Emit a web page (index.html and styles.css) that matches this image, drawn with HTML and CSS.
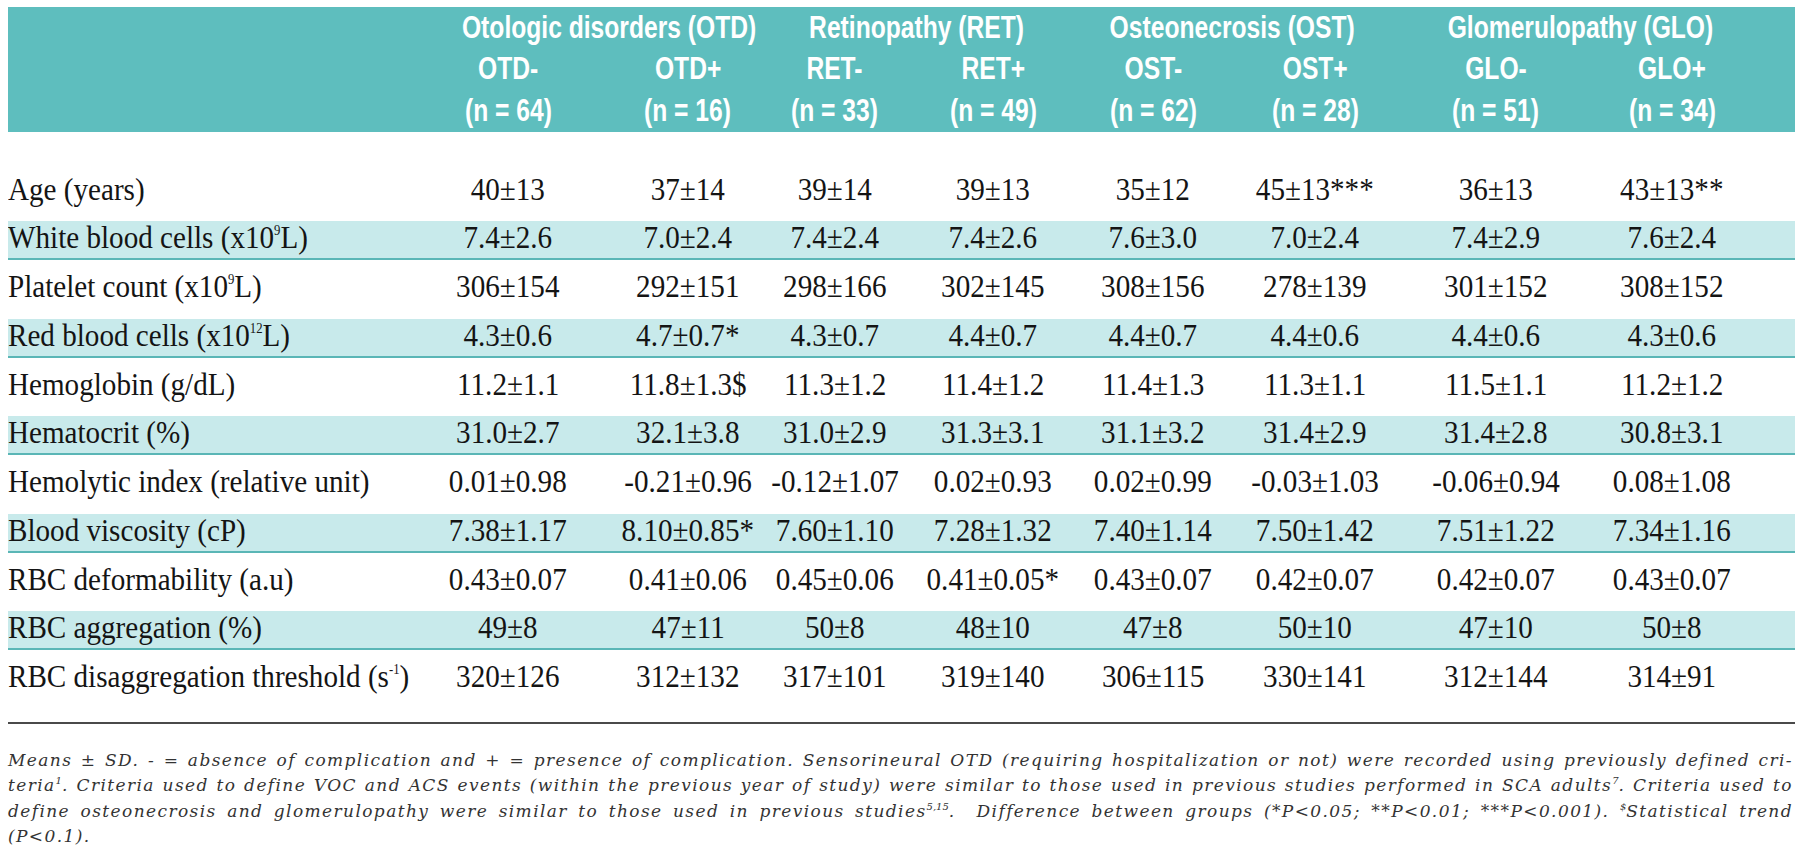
FILE: index.html
```html
<!DOCTYPE html>
<html lang="en">
<head>
<meta charset="utf-8">
<title>Table</title>
<link rel="stylesheet" href="styles.css">
</head>
<body>
<div class="page">
  <div class="thead">
    <div class="hrow groups">
      <div class="hc"></div>
      <div class="grp g-otd"><span>Otologic disorders (OTD)</span></div>
      <div class="grp g-ret"><span>Retinopathy (RET)</span></div>
      <div class="grp g-ost"><span>Osteonecrosis (OST)</span></div>
      <div class="grp g-glo"><span>Glomerulopathy (GLO)</span></div>
    </div>
    <div class="hrow subs">
      <div class="hc"></div>
      <div class="hc"><span>OTD-</span></div>
      <div class="hc"><span>OTD+</span></div>
      <div class="hc"><span>RET-</span></div>
      <div class="hc"><span>RET+</span></div>
      <div class="hc"><span>OST-</span></div>
      <div class="hc"><span>OST+</span></div>
      <div class="hc"><span>GLO-</span></div>
      <div class="hc"><span>GLO+</span></div>
    </div>
    <div class="hrow ns">
      <div class="hc"></div>
      <div class="hc"><span>(n = 64)</span></div>
      <div class="hc"><span>(n = 16)</span></div>
      <div class="hc"><span>(n = 33)</span></div>
      <div class="hc"><span>(n = 49)</span></div>
      <div class="hc"><span>(n = 62)</span></div>
      <div class="hc"><span>(n = 28)</span></div>
      <div class="hc"><span>(n = 51)</span></div>
      <div class="hc"><span>(n = 34)</span></div>
    </div>
  </div>

  <div class="tbody">
    <div class="row">
      <div class="lbl"><span>Age (years)</span></div>
      <div class="cell"><span>40±13</span></div><div class="cell"><span>37±14</span></div><div class="cell"><span>39±14</span></div><div class="cell"><span>39±13</span></div><div class="cell"><span>35±12</span></div><div class="cell"><span>45±13***</span></div><div class="cell"><span>36±13</span></div><div class="cell"><span>43±13**</span></div>
    </div>
    <div class="row alt">
      <div class="lbl"><span>White blood cells (x10<sup class="sp">9</sup>L)</span></div>
      <div class="cell"><span>7.4±2.6</span></div><div class="cell"><span>7.0±2.4</span></div><div class="cell"><span>7.4±2.4</span></div><div class="cell"><span>7.4±2.6</span></div><div class="cell"><span>7.6±3.0</span></div><div class="cell"><span>7.0±2.4</span></div><div class="cell"><span>7.4±2.9</span></div><div class="cell"><span>7.6±2.4</span></div>
    </div>
    <div class="row">
      <div class="lbl"><span>Platelet count (x10<sup class="sp">9</sup>L)</span></div>
      <div class="cell"><span>306±154</span></div><div class="cell"><span>292±151</span></div><div class="cell"><span>298±166</span></div><div class="cell"><span>302±145</span></div><div class="cell"><span>308±156</span></div><div class="cell"><span>278±139</span></div><div class="cell"><span>301±152</span></div><div class="cell"><span>308±152</span></div>
    </div>
    <div class="row alt">
      <div class="lbl"><span>Red blood cells (x10<sup class="sp">12</sup>L)</span></div>
      <div class="cell"><span>4.3±0.6</span></div><div class="cell"><span>4.7±0.7*</span></div><div class="cell"><span>4.3±0.7</span></div><div class="cell"><span>4.4±0.7</span></div><div class="cell"><span>4.4±0.7</span></div><div class="cell"><span>4.4±0.6</span></div><div class="cell"><span>4.4±0.6</span></div><div class="cell"><span>4.3±0.6</span></div>
    </div>
    <div class="row">
      <div class="lbl"><span>Hemoglobin (g/dL)</span></div>
      <div class="cell"><span>11.2±1.1</span></div><div class="cell"><span>11.8±1.3$</span></div><div class="cell"><span>11.3±1.2</span></div><div class="cell"><span>11.4±1.2</span></div><div class="cell"><span>11.4±1.3</span></div><div class="cell"><span>11.3±1.1</span></div><div class="cell"><span>11.5±1.1</span></div><div class="cell"><span>11.2±1.2</span></div>
    </div>
    <div class="row alt">
      <div class="lbl"><span>Hematocrit (%)</span></div>
      <div class="cell"><span>31.0±2.7</span></div><div class="cell"><span>32.1±3.8</span></div><div class="cell"><span>31.0±2.9</span></div><div class="cell"><span>31.3±3.1</span></div><div class="cell"><span>31.1±3.2</span></div><div class="cell"><span>31.4±2.9</span></div><div class="cell"><span>31.4±2.8</span></div><div class="cell"><span>30.8±3.1</span></div>
    </div>
    <div class="row">
      <div class="lbl"><span>Hemolytic index (relative unit)</span></div>
      <div class="cell"><span>0.01±0.98</span></div><div class="cell"><span>-0.21±0.96</span></div><div class="cell"><span>-0.12±1.07</span></div><div class="cell"><span>0.02±0.93</span></div><div class="cell"><span>0.02±0.99</span></div><div class="cell"><span>-0.03±1.03</span></div><div class="cell"><span>-0.06±0.94</span></div><div class="cell"><span>0.08±1.08</span></div>
    </div>
    <div class="row alt">
      <div class="lbl"><span>Blood viscosity (cP)</span></div>
      <div class="cell"><span>7.38±1.17</span></div><div class="cell"><span>8.10±0.85*</span></div><div class="cell"><span>7.60±1.10</span></div><div class="cell"><span>7.28±1.32</span></div><div class="cell"><span>7.40±1.14</span></div><div class="cell"><span>7.50±1.42</span></div><div class="cell"><span>7.51±1.22</span></div><div class="cell"><span>7.34±1.16</span></div>
    </div>
    <div class="row">
      <div class="lbl"><span>RBC deformability (a.u)</span></div>
      <div class="cell"><span>0.43±0.07</span></div><div class="cell"><span>0.41±0.06</span></div><div class="cell"><span>0.45±0.06</span></div><div class="cell"><span>0.41±0.05*</span></div><div class="cell"><span>0.43±0.07</span></div><div class="cell"><span>0.42±0.07</span></div><div class="cell"><span>0.42±0.07</span></div><div class="cell"><span>0.43±0.07</span></div>
    </div>
    <div class="row alt">
      <div class="lbl"><span>RBC aggregation (%)</span></div>
      <div class="cell"><span>49±8</span></div><div class="cell"><span>47±11</span></div><div class="cell"><span>50±8</span></div><div class="cell"><span>48±10</span></div><div class="cell"><span>47±8</span></div><div class="cell"><span>50±10</span></div><div class="cell"><span>47±10</span></div><div class="cell"><span>50±8</span></div>
    </div>
    <div class="row">
      <div class="lbl"><span>RBC disaggregation threshold (s<sup class="sp">-1</sup>)</span></div>
      <div class="cell"><span>320±126</span></div><div class="cell"><span>312±132</span></div><div class="cell"><span>317±101</span></div><div class="cell"><span>319±140</span></div><div class="cell"><span>306±115</span></div><div class="cell"><span>330±141</span></div><div class="cell"><span>312±144</span></div><div class="cell"><span>314±91</span></div>
    </div>
  </div>

  <div class="rule"></div>

  <div class="notes">
    <p class="ln">Means ± SD. - = absence of complication and + = presence of complication. Sensorineural OTD (requiring hospitalization or not) were recorded using previously defined cri-</p>
    <p class="ln">teria<sup class="fs">1</sup>. Criteria used to define VOC and ACS events (within the previous year of study) were similar to those used in previous studies performed in SCA adults<sup class="fs">7</sup>. Criteria used to</p>
    <p class="ln">define osteonecrosis and glomerulopathy were similar to those used in previous studies<sup class="fs">5,15</sup>.&nbsp; Difference between groups (*P&lt;0.05; **P&lt;0.01; ***P&lt;0.001). <sup class="fs">$</sup>Statistical trend</p>
    <p class="ln end">(P&lt;0.1).</p>
  </div>
</div>
</body>
</html>
```

FILE: styles.css
```css
:root {
  --cols: 410px 180px 163.5px 152.5px 158.5px 161px 172px 178.5px 211px;
  --teal: #5ebebe;
  --teal-line: #5ab6b6;
  --teal-light: #c8eaeb;
}

html, body {
  margin: 0;
  padding: 0;
  background: #ffffff;
}

.page {
  width: 1787px;
  padding: 7px 0 0 8px;
}

/* ---------- header ---------- */
.thead {
  background: var(--teal);
  color: #ffffff;
  font-family: "Liberation Sans", Arial, sans-serif;
  font-weight: 700;
  font-size: 32px;
}

.hrow {
  display: grid;
  grid-template-columns: var(--cols);
}

.groups { height: 40px; line-height: 40px; }
.subs   { height: 42px; line-height: 42px; }
.ns     { height: 43px; line-height: 43px; }

.hc, .grp {
  display: flex;
  justify-content: center;
  white-space: nowrap;
}

.grp { grid-column: span 2; }

.hc span, .grp span {
  display: inline-block;
  transform: scaleX(0.77);
  transform-origin: 50% 50%;
}

.g-otd { padding-left: 38px; }
.g-ost { padding-right: 14px; }
.g-glo { padding-right: 40px; }

/* per-column centring offsets (header + body) */
.hrow > :nth-child(3), .row > :nth-child(3) { padding-left: 16px; }
.hrow.subs > :nth-child(4), .hrow.ns > :nth-child(4), .row > :nth-child(4) { padding-right: 6px; }
.hrow.subs > :nth-child(7), .hrow.ns > :nth-child(7), .row > :nth-child(7) { padding-right: 9px; }
.hrow.subs > :nth-child(8), .hrow.ns > :nth-child(8), .row > :nth-child(8) { padding-left: 2px; }
.hrow.subs > :nth-child(9), .hrow.ns > :nth-child(9), .row > :nth-child(9) { padding-right: 35px; }
.hrow.groups > :nth-child(3) { padding-left: 0; }

/* ---------- body ---------- */
.tbody {
  margin-top: 40.5px;
}

.row {
  display: grid;
  grid-template-columns: var(--cols);
  height: 48.75px;
  font-family: "Liberation Serif", "Times New Roman", serif;
  font-size: 32px;
  line-height: 32.4px;
  color: #141414;
}

.row.alt {
  background: linear-gradient(to bottom,
    var(--teal-light) 0, var(--teal-light) 37px,
    var(--teal-line) 37px, var(--teal-line) 39px,
    transparent 39px);
}

.lbl, .cell {
  display: flex;
  align-items: flex-start;
  white-space: nowrap;
}

.cell { justify-content: center; }
.lbl { justify-content: flex-start; }

.lbl span, .cell span {
  display: inline-block;
  transform: scaleX(0.91);
}

.lbl span { transform-origin: 0 50%; }
.cell span { transform-origin: 50% 50%; }

.sp {
  font-size: 14px;
  line-height: 0;
  vertical-align: 13px;
}

/* ---------- rule + notes ---------- */
.rule {
  height: 2.5px;
  background: #4a4a4a;
  margin-top: 12.75px;
}

.notes {
  margin-top: 23.5px;
  width: 1785px;
  font-family: "DejaVu Serif", "Liberation Serif", serif;
  font-style: italic;
  font-size: 17px;
  line-height: 25.5px;
  letter-spacing: 1.4px;
  color: #333333;
}

.ln {
  margin: 0;
  text-align: justify;
  text-align-last: justify;
}

.ln.end { text-align-last: left; }

.fs {
  font-size: 10px;
  line-height: 0;
  vertical-align: 7px;
  letter-spacing: 0;
}
```
